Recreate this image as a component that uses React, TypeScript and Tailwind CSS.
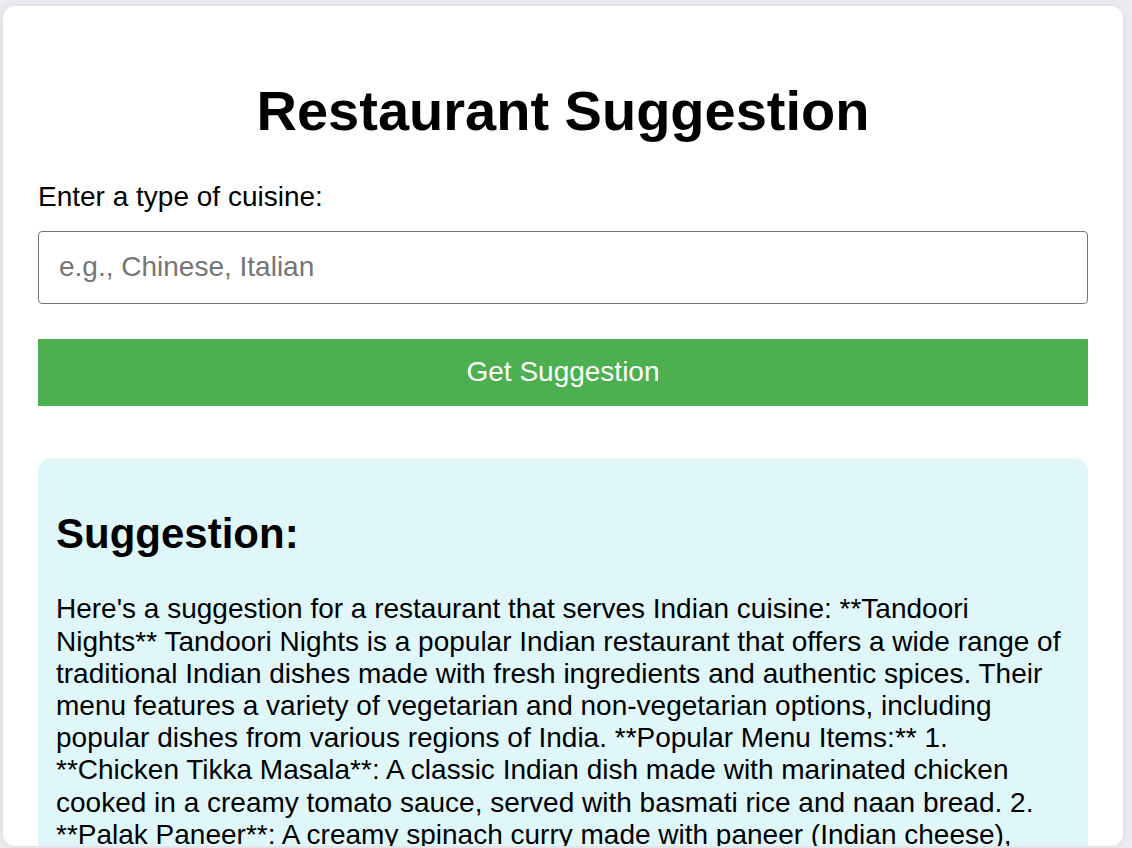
export default function App() {
  const suggestion =
    "Here's a suggestion for a restaurant that serves Indian cuisine: **Tandoori Nights** Tandoori Nights is a popular Indian restaurant that offers a wide range of traditional Indian dishes made with fresh ingredients and authentic spices. Their menu features a variety of vegetarian and non-vegetarian options, including popular dishes from various regions of India. **Popular Menu Items:** 1. **Chicken Tikka Masala**: A classic Indian dish made with marinated chicken cooked in a creamy tomato sauce, served with basmati rice and naan bread. 2. **Palak Paneer**: A creamy spinach curry made with paneer (Indian cheese), garlic, and ginger, served with basmati rice or naan bread. 3. **Lamb Vindaloo**: A spicy curry made with tender lamb, potatoes, and a blend of aromatic spices."

  return (
    <div className="h-[848px] overflow-hidden bg-[#ebebf0] pl-[3px] pt-[6px] font-['Liberation_Sans',Arial,sans-serif] text-[28px] text-black">
      <div className="h-[840px] w-[1120px] overflow-hidden rounded-[12px] bg-white px-[35px] pt-[35px] shadow-[0_0_8px_rgba(0,0,0,0.08)]">
        <h1 className="mt-[37.5px] mb-[38.5px] text-center text-[56px] leading-[64.4px] font-bold">
          Restaurant Suggestion
        </h1>

        <label className="block leading-[32.2px]">Enter a type of cuisine:</label>

        <input
          type="text"
          placeholder="e.g., Chinese, Italian"
          className="mt-[17px] block h-[73px] w-full rounded-[4px] border border-[#767676] px-[20px] text-[28px] placeholder:text-[#757575] outline-none"
        />

        <button className="mt-[35px] block h-[67px] w-full bg-[#4caf50] text-[28px] text-white">
          Get Suggestion
        </button>

        <div className="mt-[52px] rounded-[14px] bg-[#e0f7fa] px-[18px] pt-[17.5px] pb-[17.5px]">
          <h2 className="mt-[35px] mb-[35px] text-[42px] leading-[48.3px] font-bold">Suggestion:</h2>
          <p className="leading-[32.2px]">{suggestion}</p>
        </div>
      </div>
    </div>
  )
}
